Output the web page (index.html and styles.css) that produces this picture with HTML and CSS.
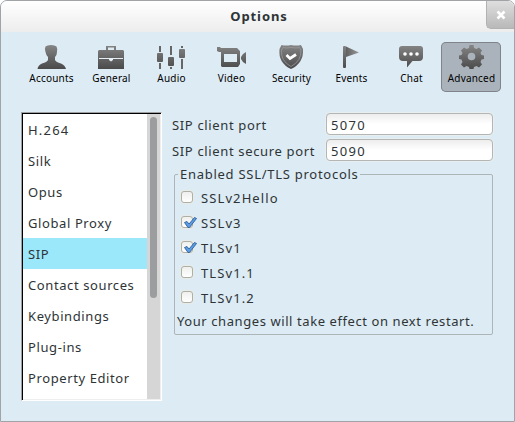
FILE: index.html
```
<!DOCTYPE html>
<html lang="en">
<head>
<meta charset="utf-8">
<title>Options</title>
<link rel="stylesheet" href="styles.css">
</head>
<body>
<div class="window">
  <header class="titlebar">
    <h1>Options</h1>
    <button class="close" aria-label="Close"><svg width="10" height="10" viewBox="0 0 10 10"><path d="M1.500 1.500l7 7M8.500 1.500L1.500 8.500" stroke="#fff" stroke-width="2.600"/></svg></button>
  </header>
  <nav class="toolbar">
    <div class="tool"><svg viewBox="0 0 60 26"><defs><linearGradient id="g" gradientUnits="userSpaceOnUse" x1="0" y1="1" x2="0" y2="25"><stop offset="0" stop-color="#858585"/><stop offset="1" stop-color="#4a4a4a"/></linearGradient></defs><path fill="url(#g)" d="M24.500 2.500Q26 1 30 1T35.500 2.500Q36.500 4 36 8Q36 11 34 13V16Q35 18 40 19.500Q44 21 45 25H16.500Q17 21 21 19.500Q26 18 27 16V13Q25 11 24.500 8Q23.500 4 24.500 2.500Z"/></svg><span>Accounts</span></div>
    <div class="tool"><svg viewBox="0 0 60 26"><path fill="url(#g)" fill-rule="evenodd" d="M25 6V2H35V6H42L43 7V25H17V7L18 6ZM27 6H33V3.500H27Z"/><path d="M18 14.500H28M32 14.500H42" stroke="#e5eef3"/><path d="M28 14H32V16L30 17.500L28 16Z" fill="#e8f0f5"/></svg><span>General</span></div>
    <div class="tool"><svg viewBox="0 0 60 26"><path d="M19 2V8M19 19V25M30 2V11M30 23V25M41 2V4M41 15V25" stroke="#666" stroke-width="2"/><g fill="url(#g)"><rect x="16" y="9" width="6" height="9" rx="1"/><rect x="27" y="13" width="6" height="9" rx="1"/><rect x="38" y="5" width="6" height="9" rx="1"/></g></svg><span>Audio</span></div>
    <div class="tool"><svg viewBox="0 0 60 26"><path fill="url(#g)" fill-rule="evenodd" d="M16 3H19L20 4H36L39 7V20L37 23H21L20 22V8H18L16 7ZM23 10V18H36V10ZM45 8V20L42 18L40 15V13L42 10Z"/></svg><span>Video</span></div>
    <div class="tool"><svg viewBox="0 0 60 26"><path fill="url(#g)" d="M30 1Q35 2 40 1L42 5Q43 19 30 25Q17 19 18.500 5L20.500 1Q25 2 30 1Z"/><path fill="none" stroke="#999" stroke-width=".8" d="M30 3.500Q35 4.500 38.500 3.500L40 6Q40.500 17 30 22.500Q19.500 17 20.500 6L22 3.500Q25 4.500 30 3.500Z"/><path fill="none" stroke="#fff" stroke-width="2.800" d="M25.500 11L29 14.500L35 10.500"/></svg><span>Security</span></div>
    <div class="tool"><svg viewBox="0 0 60 26"><defs><linearGradient id="f"><stop stop-color="#606060"/><stop offset="1" stop-color="#999"/></linearGradient></defs><rect x="22" y="2" width="3" height="22" rx="1" fill="url(#g)"/><path d="M25 2.500L38 8.500L25 13Z" fill="url(#f)"/></svg><span>Events</span></div>
    <div class="tool"><svg viewBox="0 0 60 26"><path fill="url(#g)" d="M21 2H39Q42 2 42 5V13Q42 17 38 17H31.500L26 23.500V17H22Q18 17 18 13V5Q18 2 21 2Z"/><g fill="#fff"><circle cx="24" cy="10" r="1.800"/><circle cx="30" cy="10" r="1.800"/><circle cx="36" cy="10" r="1.800"/></g></svg><span>Chat</span></div>
    <div class="tool active"><svg viewBox="0 0 60 26"><path fill="url(#g)" fill-rule="evenodd" d="M28.500 1H32.500L33 4L35.500 5L38 3.500L41 6.500L39.500 9L40.500 11L43 11.500V15L40.500 15.500L39.500 18L41 20.500L38 23.500L35.500 22L33 23L32.500 25H28.500L28 23L25.500 22L23 23.500L20 20.500L21.500 18L20.500 15.500L18 15V11.500L20.500 11L21.500 9L20 6.500L23 3.500L25.500 5L28 4ZM30.500 8.700A3.800 3.800 0 1 0 30.500 16.300A3.800 3.800 0 1 0 30.500 8.700Z"/></svg><span>Advanced</span></div>
  </nav>
  <main class="content">
    <div class="list">
      <ul>
        <li class="wide">H.264</li><li>Silk</li><li>Opus</li><li>Global Proxy</li><li class="selected">SIP</li><li>Contact sources</li><li>Keybindings</li><li>Plug-ins</li><li>Property Editor</li>
      </ul>
      <div class="track"><div class="thumb"></div></div>
    </div>
    <section class="panel">
      <div class="field"><label>SIP client port</label><div class="input">5070</div></div>
      <div class="field"><label>SIP client secure port</label><div class="input">5090</div></div>
      <fieldset>
        <legend>Enabled SSL/TLS protocols</legend>
        <div class="option"><i class="box"></i><span>SSLv2Hello</span></div>
        <div class="option"><i class="box"><svg viewBox="0 0 14 13"><path d="M1.500 6.500L4 5.500L6 8L11.500 1.500L13.500 2.500L6.500 11.500H5Z"/></svg></i><span>SSLv3</span></div>
        <div class="option"><i class="box"><svg viewBox="0 0 14 13"><path d="M1.500 6.500L4 5.500L6 8L11.500 1.500L13.500 2.500L6.500 11.500H5Z"/></svg></i><span>TLSv1</span></div>
        <div class="option"><i class="box"></i><span>TLSv1.1</span></div>
        <div class="option"><i class="box"></i><span>TLSv1.2</span></div>
        <p>Your changes will take effect on next restart.</p>
      </fieldset>
    </section>
  </main>
</div>
</body>
</html>
```
FILE: styles.css
```
* { box-sizing: border-box; }
body { margin: 0; background: #fff; font: 13px/20px "Noto Sans", sans-serif; color: #2e3436; letter-spacing: .6px; }
.window { width: 515px; height: 422px; border: 1px solid #a0a4a7; border-radius: 7px 7px 0 0; background: #ddebf4; overflow: hidden; }
.titlebar { height: 31px; display: grid; grid-template-columns: 1fr 28px; background: linear-gradient(#fff, #ededed); }
h1 { margin: 0; padding: 1px 0 0 31px; text-align: center; font-size: 13px; line-height: 29px; font-weight: 700; letter-spacing: .9px; }
.close { height: 28px; padding: 0; border: 1px solid #b2b2b2; border-top: 0; border-right: 0; border-radius: 0 0 0 5px; background: linear-gradient(#dedede, #b9b9b9); display: flex; align-items: center; justify-content: center; }
.toolbar { display: flex; padding: 10px 0 0 20px; }
.tool { width: 60px; height: 50px; padding-top: 2px; flex: none; text-align: center; font-size: 10px; line-height: 14px; letter-spacing: .2px; color: #000; white-space: nowrap; border-radius: 5px; }
.tool svg { display: block; width: 60px; height: 26px; }
.tool span { display: block; padding: 1px 0 0 1px; }
.active { background: #aab3bb; box-shadow: inset 0 0 0 1px #808488; }
.content { display: flex; padding: 20px 0 0 20px; }
.list { width: 141px; height: 289px; border: 1px solid; border-color: #9da1a4 #fff #fff #9da1a4; background: #fff; display: flex; box-shadow: inset 1px 1px #000, inset -1px -1px #eee; padding: 1px; }
ul { margin: 0; padding: 0; list-style: none; flex: 1; }
li { height: 31px; padding: 1px 0 0 5px; line-height: 31px; white-space: nowrap; }
.wide { letter-spacing: 1.2px; }
.selected { background: #9be8fb; }
.track { width: 13px; background: #d6d6d6; padding: 3px 3px 0; }
.thumb { width: 7px; height: 181px; border-radius: 4px; background: #9b9d9f; }
.panel { width: 322px; margin-left: 10px; }
.field { display: flex; height: 26px; padding-top: 1px; }
.field label { width: 154px; line-height: 25px; letter-spacing: .65px; }
.input { width: 167px; height: 22px; border: 1px solid #b3b6b4; border-radius: 4px; background: linear-gradient(#ededed, #fff 50%); padding-left: 4px; line-height: 22px; letter-spacing: 1.3px; box-shadow: 0 0 0 1px #e9eeee; }
fieldset { margin: 0 0 0 2px; padding: 0 0 0 2px; width: 319px; height: 171px; border: 1px solid #aeb5b7; border-radius: 2px; }
legend { margin-left: 1px; padding: 0 1px 0 2px; height: 20px; letter-spacing: .73px; }
.option { display: flex; align-items: center; height: 25px; padding-left: 4px; letter-spacing: 1.1px; }
.option span { padding-top: 2px; }
.box { display: block; width: 12px; height: 12px; margin-right: 8px; border: 1px solid #aeb0a5; border-radius: 3px; background: linear-gradient(#efefed, #fff); box-shadow: 0 0 0 1px #e8ebe7; }
.box svg { display: block; width: 14px; height: 13px; margin: -1px 0 0 1px; fill: #5e9de0; stroke: #285f9f; stroke-width: .9; }
p { margin: 0; padding-top: 1px; line-height: 22px; white-space: nowrap; letter-spacing: .58px; }
```
